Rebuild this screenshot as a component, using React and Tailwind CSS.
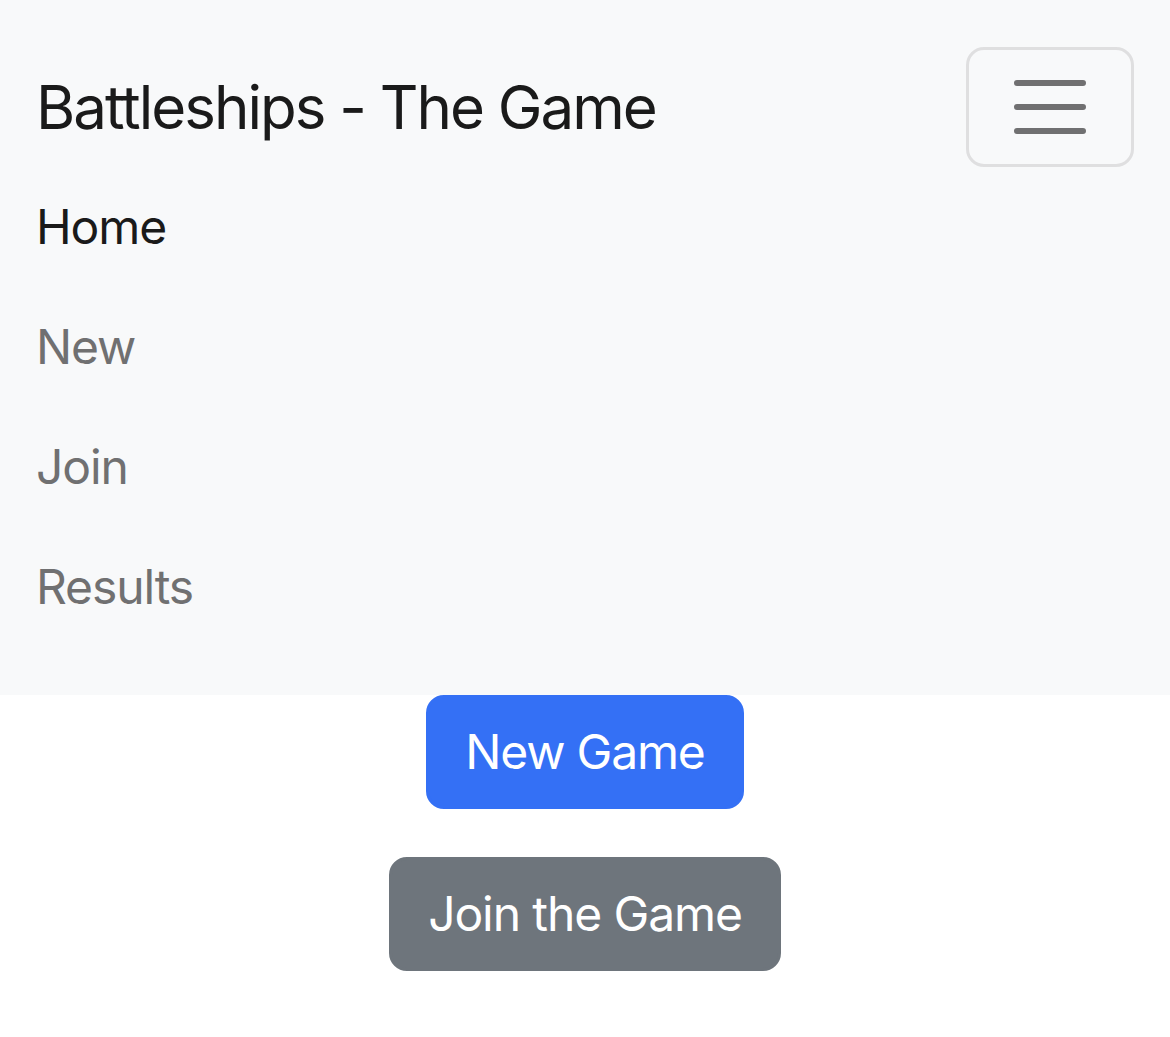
export default function App() {
  const links = ['New', 'Join', 'Results'];
  return (
    <div className="min-h-[1037px] bg-white" style={{ fontFamily: 'Inter, "Noto Sans", sans-serif' }}>
      {/* Navbar */}
      <nav className="bg-[#f8f9fa] px-9 pt-[47px] pb-[48px]">
        <div className="flex h-[120px] items-center justify-between">
          <a className="text-[60px] leading-[90px] tracking-[-2px] text-[#1a1a1a]">Battleships - The Game</a>
          <button className="flex h-[120px] w-[168px] items-center justify-center rounded-[18px] border-[3px] border-[#dfdfe0]">
            <svg width="90" height="90" viewBox="0 0 30 30">
              <path d="M4 7h22M4 15h22M4 23h22" stroke="#707071" strokeWidth="2" strokeLinecap="round" />
            </svg>
          </button>
        </div>
        <ul>
          <li className="py-6 text-[48px] leading-[72px] tracking-[-1.1px] text-[#1a1a1a]">Home</li>
          {links.map((l) => (
            <li key={l} className="py-6 text-[48px] leading-[72px] tracking-[-1.1px] text-[#707071]">{l}</li>
          ))}
        </ul>
      </nav>

      {/* Actions */}
      <div className="flex flex-col items-center gap-[48px]">
        <button className="rounded-[18px] border-[3px] border-[#3470f5] bg-[#3470f5] px-9 py-[18px] text-[48px] leading-[72px] tracking-[-1.2px] text-white">
          New Game
        </button>
        <button className="rounded-[18px] border-[3px] border-[#6e757c] bg-[#6e757c] px-9 py-[18px] text-[48px] leading-[72px] tracking-[-1.1px] text-white">
          Join the Game
        </button>
      </div>
    </div>
  );
}
